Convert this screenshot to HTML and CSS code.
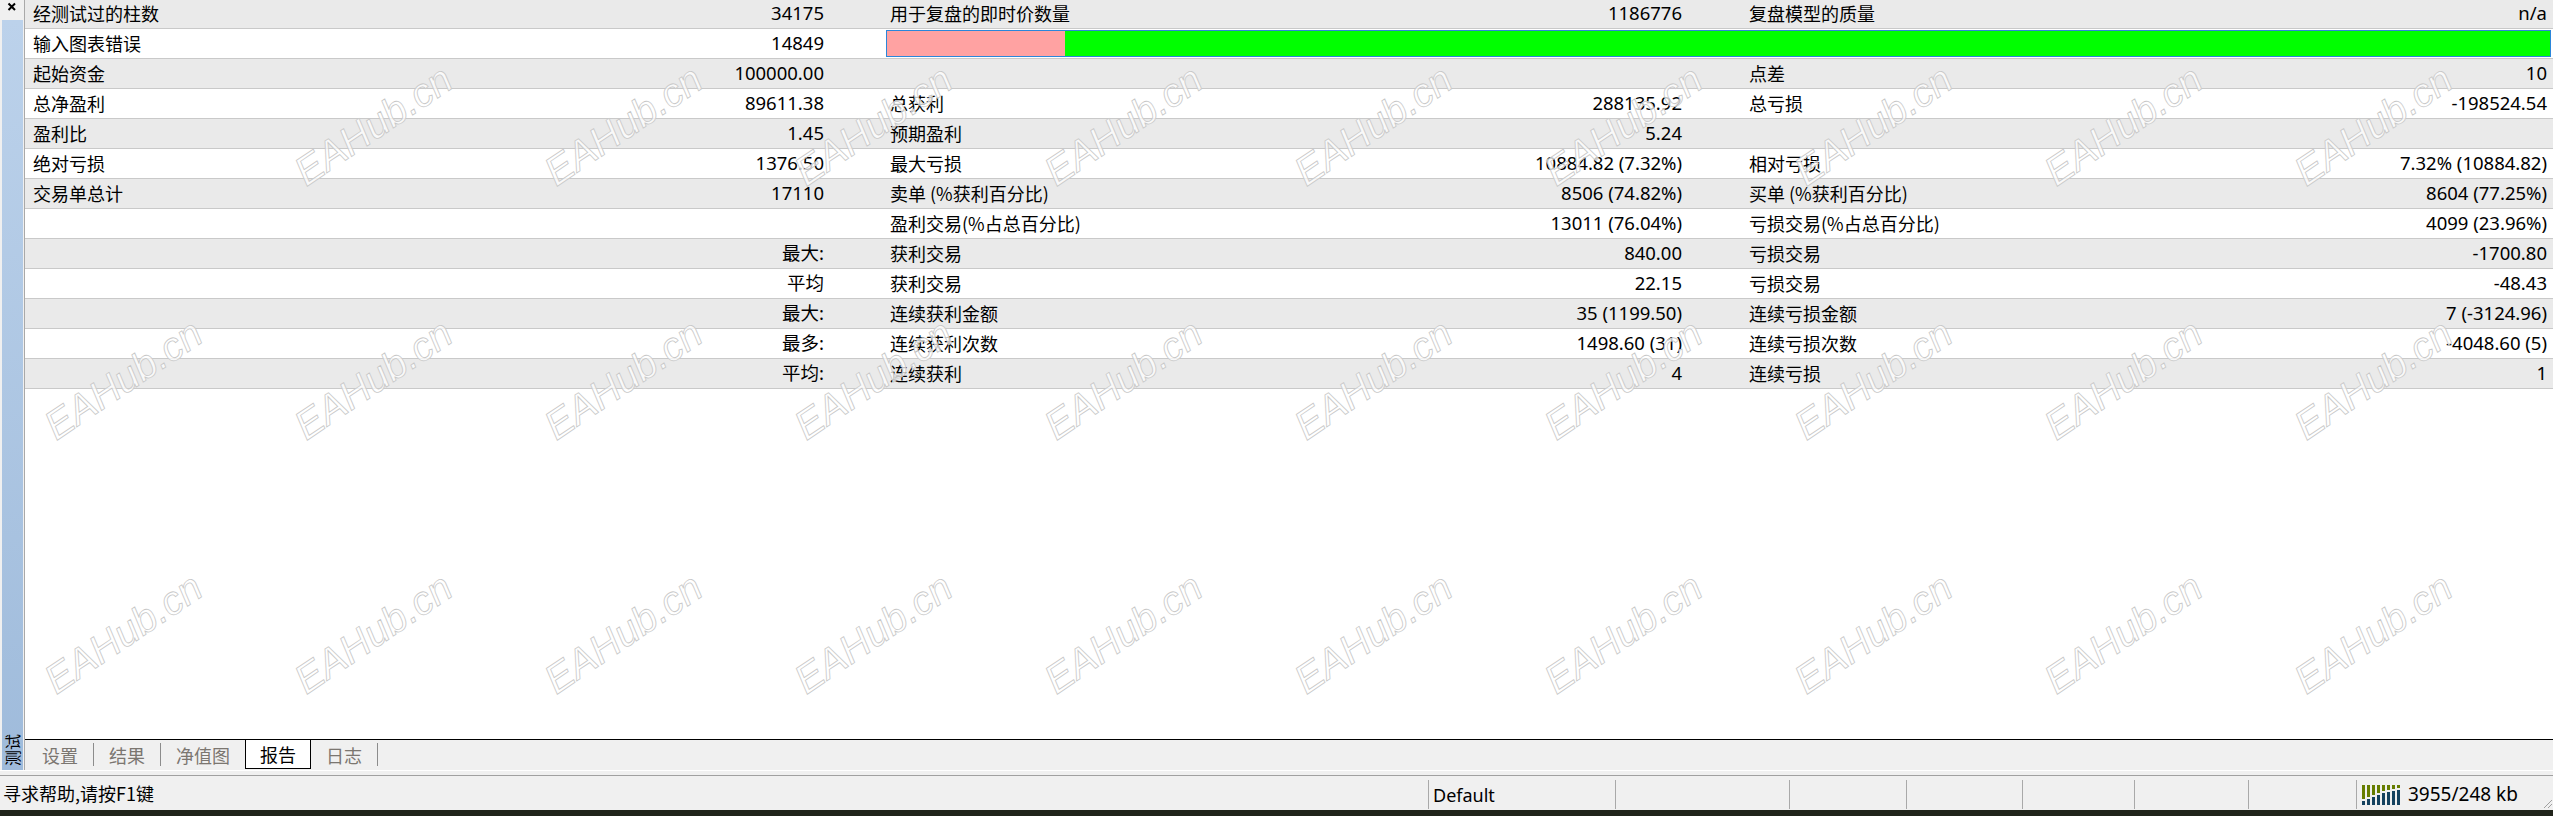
FILE: index.html
```html
<!DOCTYPE html>
<html lang="zh-CN">
<head>
<meta charset="utf-8">
<title>测试器 - 报告</title>
<link rel="stylesheet" href="styles.css">
</head>
<body>
<div class="window">
  <div class="upper">
    <aside class="sidebar">
      <div class="close">
        <svg width="21" height="20" viewBox="0 0 21 20"><path d="M6.5 3.5 L13 10 M13 3.5 L6.5 10" stroke="#000" stroke-width="2" fill="none"/></svg>
      </div>
      <div class="caption"><span class="caption-text">测试</span></div>
    </aside>
    <div class="panel">
      <div class="report">
        <div class="rows">
          <div class="row g">
            <span class="lab c1">经测试过的柱数</span><span class="val c2">34175</span>
            <span class="lab c3">用于复盘的即时价数量</span><span class="val c4">1186776</span>
            <span class="lab c5">复盘模型的质量</span><span class="val c6">n/a</span>
          </div>
          <div class="row">
            <span class="lab c1">输入图表错误</span><span class="val c2">14849</span>
            <div class="bar"><div class="bar-bad"></div><div class="bar-good"></div></div>
          </div>
          <div class="row g">
            <span class="lab c1">起始资金</span><span class="val c2">100000.00</span>
            <span class="lab c5">点差</span><span class="val c6">10</span>
          </div>
          <div class="row">
            <span class="lab c1">总净盈利</span><span class="val c2">89611.38</span>
            <span class="lab c3">总获利</span><span class="val c4">288135.92</span>
            <span class="lab c5">总亏损</span><span class="val c6">-198524.54</span>
          </div>
          <div class="row g">
            <span class="lab c1">盈利比</span><span class="val c2">1.45</span>
            <span class="lab c3">预期盈利</span><span class="val c4">5.24</span>
          </div>
          <div class="row">
            <span class="lab c1">绝对亏损</span><span class="val c2">1376.50</span>
            <span class="lab c3">最大亏损</span><span class="val c4">10884.82 (7.32%)</span>
            <span class="lab c5">相对亏损</span><span class="val c6">7.32% (10884.82)</span>
          </div>
          <div class="row g">
            <span class="lab c1">交易单总计</span><span class="val c2">17110</span>
            <span class="lab c3">卖单 (%获利百分比)</span><span class="val c4">8506 (74.82%)</span>
            <span class="lab c5">买单 (%获利百分比)</span><span class="val c6">8604 (77.25%)</span>
          </div>
          <div class="row">
            <span class="lab c3">盈利交易(%占总百分比)</span><span class="val c4">13011 (76.04%)</span>
            <span class="lab c5">亏损交易(%占总百分比)</span><span class="val c6">4099 (23.96%)</span>
          </div>
          <div class="row g">
            <span class="val c2">最大:</span>
            <span class="lab c3">获利交易</span><span class="val c4">840.00</span>
            <span class="lab c5">亏损交易</span><span class="val c6">-1700.80</span>
          </div>
          <div class="row">
            <span class="val c2">平均</span>
            <span class="lab c3">获利交易</span><span class="val c4">22.15</span>
            <span class="lab c5">亏损交易</span><span class="val c6">-48.43</span>
          </div>
          <div class="row g">
            <span class="val c2">最大:</span>
            <span class="lab c3">连续获利金额</span><span class="val c4">35 (1199.50)</span>
            <span class="lab c5">连续亏损金额</span><span class="val c6">7 (-3124.96)</span>
          </div>
          <div class="row">
            <span class="val c2">最多:</span>
            <span class="lab c3">连续获利次数</span><span class="val c4">1498.60 (31)</span>
            <span class="lab c5">连续亏损次数</span><span class="val c6">-4048.60 (5)</span>
          </div>
          <div class="row g">
            <span class="val c2">平均:</span>
            <span class="lab c3">连续获利</span><span class="val c4">4</span>
            <span class="lab c5">连续亏损</span><span class="val c6">1</span>
          </div>
        </div>
      </div>
      <nav class="tabs">
        <span class="tab">设置</span><span class="sep"></span>
        <span class="tab">结果</span><span class="sep"></span>
        <span class="tab">净值图</span>
        <span class="tab active">报告</span>
        <span class="tab">日志</span><span class="sep"></span>
      </nav>
    </div>
  </div>
  <div class="divider"></div>
  <footer class="status">
    <div class="st-main">寻求帮助,请按F1键</div>
    <div class="seg w1"><span class="latin">Default</span></div>
    <div class="seg w2"></div>
    <div class="seg w3"></div>
    <div class="seg w4"></div>
    <div class="seg w5"></div>
    <div class="seg w6"></div>
    <div class="seg w7"></div>
    <div class="seg w8">
      <svg class="meter" width="38" height="20" viewBox="0 0 38 20">
        <g fill="#667d00">
          <rect x="0" y="0" width="3" height="14"/>
          <rect x="5" y="0" width="3" height="12"/>
          <rect x="10" y="0" width="3" height="10"/>
          <rect x="15" y="0" width="3" height="8"/>
          <rect x="20" y="0" width="3" height="6"/>
          <rect x="25" y="0" width="3" height="5"/>
          <rect x="30" y="0" width="3" height="4"/>
          <rect x="35" y="0" width="3" height="3"/>
        </g>
        <g fill="#14425f">
          <rect x="0" y="16" width="3" height="4"/>
          <rect x="5" y="14" width="3" height="6"/>
          <rect x="10" y="12" width="3" height="8"/>
          <rect x="15" y="10" width="3" height="10"/>
          <rect x="20" y="8" width="3" height="12"/>
          <rect x="25" y="7" width="3" height="13"/>
          <rect x="30" y="6" width="3" height="14"/>
          <rect x="35" y="5" width="3" height="15"/>
        </g>
      </svg>
      <span class="latin mem">3955/248 kb</span>
      <svg class="grip" width="12" height="12" viewBox="0 0 12 12"><path d="M11 3 L3 11 M11 7 L7 11" stroke="#a0a0a0" stroke-width="1" fill="none"/></svg>
    </div>
  </footer>
  <div class="taskbar"></div>

  <div class="watermarks" aria-hidden="true">
    <div class="wm"></div>
    <div class="wm"><span>EAHub.cn</span></div>
    <div class="wm"><span>EAHub.cn</span></div>
    <div class="wm"><span>EAHub.cn</span></div>
    <div class="wm"><span>EAHub.cn</span></div>
    <div class="wm"><span>EAHub.cn</span></div>
    <div class="wm"><span>EAHub.cn</span></div>
    <div class="wm"><span>EAHub.cn</span></div>
    <div class="wm"><span>EAHub.cn</span></div>
    <div class="wm"><span>EAHub.cn</span></div>

    <div class="wm"><span>EAHub.cn</span></div>
    <div class="wm"><span>EAHub.cn</span></div>
    <div class="wm"><span>EAHub.cn</span></div>
    <div class="wm"><span>EAHub.cn</span></div>
    <div class="wm"><span>EAHub.cn</span></div>
    <div class="wm"><span>EAHub.cn</span></div>
    <div class="wm"><span>EAHub.cn</span></div>
    <div class="wm"><span>EAHub.cn</span></div>
    <div class="wm"><span>EAHub.cn</span></div>
    <div class="wm"><span>EAHub.cn</span></div>

    <div class="wm"><span>EAHub.cn</span></div>
    <div class="wm"><span>EAHub.cn</span></div>
    <div class="wm"><span>EAHub.cn</span></div>
    <div class="wm"><span>EAHub.cn</span></div>
    <div class="wm"><span>EAHub.cn</span></div>
    <div class="wm"><span>EAHub.cn</span></div>
    <div class="wm"><span>EAHub.cn</span></div>
    <div class="wm"><span>EAHub.cn</span></div>
    <div class="wm"><span>EAHub.cn</span></div>
    <div class="wm"><span>EAHub.cn</span></div>
  </div>
</div>
</body>
</html>
```

FILE: styles.css
```css
* { box-sizing: border-box; }

html, body {
  margin: 0;
  padding: 0;
}

body {
  width: 2553px;
  height: 816px;
  overflow: hidden;
  background: #f0f0f0;
  color: #000;
  font-family: "Noto Sans CJK SC", "Noto Sans", sans-serif;
}

.window {
  position: relative;
  width: 2553px;
  height: 816px;
  display: flex;
  flex-direction: column;
  overflow: hidden;
}

/* ---------- upper part: sidebar + report panel ---------- */
.upper {
  height: 770px;
  flex: none;
  display: flex;
}

.sidebar {
  width: 25px;
  flex: none;
  display: flex;
  flex-direction: column;
  padding: 0 1px 0 2px;
  background: #f0f0f0;
  border-right: 1px solid #a9a9a9;
}

.close {
  height: 20px;
  flex: none;
}

.close svg { display: block; }

.caption {
  flex: 1;
  display: flex;
  align-items: flex-end;
  justify-content: center;
  padding-bottom: 4px;
  background: linear-gradient(#bcd2eb, #9fbbdb);
}

.caption-text {
  writing-mode: vertical-rl;
  text-orientation: sideways;
  transform: rotate(180deg);
  font-size: 16px;
  line-height: 17px;
  color: #000;
}

.panel {
  flex: 1;
  min-width: 0;
  display: flex;
  flex-direction: column;
}

.report {
  flex: 1;
  background: #fff;
  overflow: hidden;
}

.rows {
  margin-top: -1px;
}

.row {
  display: grid;
  grid-template-columns: 400px 391px 66px 400px 392px 67px 400px 398px;
  align-items: center;
  height: 30px;
  padding: 0 6px 0 8px;
  background: #fff;
  border-bottom: 1px solid #c9c9c9;
}

.row.g { background: #eaeaea; }

.lab {
  font-size: 18px;
  line-height: 1.2;
  white-space: nowrap;
}

.val {
  font-family: "Noto Sans", "Noto Sans CJK SC", sans-serif;
  font-size: 18.5px;
  line-height: 1.2;
  text-align: right;
  white-space: nowrap;
}

.c1 { grid-column: 1; }
.c2 { grid-column: 2; }
.c3 { grid-column: 4; }
.c4 { grid-column: 5; }
.c5 { grid-column: 7; }
.c6 { grid-column: 8; }

.bar {
  grid-column: 4 / -1;
  display: flex;
  height: 27px;
  margin: 0 -4px;
  border: 1px solid #2b86da;
}

.bar-bad {
  width: 178px;
  background: #ffa2a2;
}

.bar-good {
  flex: 1;
  background: #00ff00;
}

/* ---------- tabs ---------- */
.tabs {
  height: 31px;
  flex: none;
  display: flex;
  align-items: flex-start;
  padding-left: 2px;
  background: #f0f0f0;
  border-top: 1px solid #000;
}

.tab {
  height: 29px;
  display: flex;
  align-items: center;
  padding: 0 15px;
  font-size: 18px;
  line-height: 1;
  color: #7b7670;
}

.tab.active {
  padding: 0 14px;
  background: #fff;
  color: #000;
  border: 1px solid #000;
  border-top: none;
}

.sep {
  width: 1px;
  height: 23px;
  margin-top: 3px;
  background: #8c8c8c;
}

/* ---------- divider + status bar ---------- */
.divider {
  height: 6px;
  flex: none;
  background: #f0f0f0;
  border-top: 1px solid #fff;
  border-bottom: 1px solid #a0a0a0;
}

.status {
  height: 34px;
  flex: none;
  display: flex;
  background: #f0f0f0;
  font-size: 18px;
}

.st-main {
  flex: 0 0 1428px;
  display: flex;
  align-items: center;
  padding-left: 3px;
  white-space: nowrap;
}

.seg {
  display: flex;
  align-items: center;
  margin: 4px 0 1px;
  padding-left: 4px;
  border-left: 1px solid #a9a9a9;
}

.w1 { flex: 0 0 187px; }
.w2 { flex: 0 0 174px; }
.w3 { flex: 0 0 117px; }
.w4 { flex: 0 0 116px; }
.w5 { flex: 0 0 112px; }
.w6 { flex: 0 0 114px; }
.w7 { flex: 0 0 108px; }
.w8 { flex: 1; padding-left: 5px; }

.latin {
  font-family: "Noto Sans", sans-serif;
  font-size: 18px;
  line-height: 1;
}

.meter { display: block; flex: none; }

.mem {
  margin-left: 8px;
  font-size: 19px;
}

.grip {
  display: block;
  margin-left: auto;
  align-self: flex-end;
}

.taskbar {
  height: 6px;
  flex: none;
  background: #20241a;
}

/* ---------- watermark overlay ---------- */
.watermarks {
  position: absolute;
  left: -2px;
  top: -2px;
  display: grid;
  grid-template-columns: repeat(10, 250px);
  grid-auto-rows: 254px;
  pointer-events: none;
}

.wm {
  display: flex;
  align-items: center;
  justify-content: center;
}

.wm span {
  font-family: "Liberation Sans", Arial, sans-serif;
  font-style: italic;
  font-size: 40px;
  line-height: 1;
  white-space: nowrap;
  color: rgba(255, 255, 255, 0.75);
  -webkit-text-stroke: 0.8px #c8c8c8;
  transform: rotate(-34deg);
}
```
